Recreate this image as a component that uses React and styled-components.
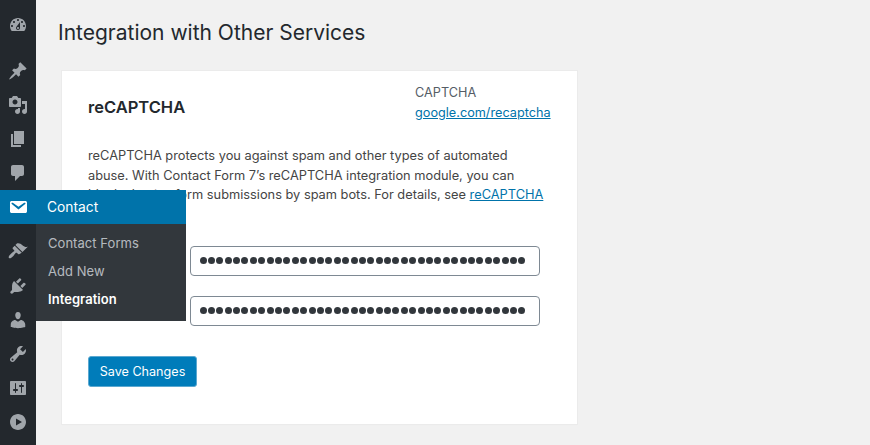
import React from "react";
import styled, { createGlobalStyle } from "styled-components";

const Global = createGlobalStyle`
  html, body { margin: 0; padding: 0; height: 100%; background: #f1f1f1; overflow: hidden; }
  body { font-family: Inter, "Liberation Sans", sans-serif; font-size: 13px; color: #444; }
`;

const Page = styled.div`
  display: flex;
  width: 870px;
  height: 445px;
  overflow: hidden;
`;
const Sidebar = styled.nav`
  flex: 0 0 36px;
  width: 36px;
  background: #23282d;
  padding-top: 8px;
  box-sizing: border-box;
  position: relative;
  z-index: 2;
`;
const MenuItem = styled.div`
  position: relative;
  height: 34px;
  width: 36px;
  display: flex;
  align-items: center;
  justify-content: center;
  margin-bottom: ${(p) => p.$gap || 0}px;
  background: ${(p) => (p.$active ? "#0073aa" : "transparent")};
  color: ${(p) => (p.$active ? "#fff" : "#a0a5aa")};
`;
const Icon = styled.svg`
  width: 20px;
  height: 20px;
  fill: currentColor;
  display: block;
`;
const Flyout = styled.div`
  position: absolute;
  left: 36px;
  top: 0;
  width: 150px;
`;
const FlyoutHead = styled.div`
  height: 34px;
  box-sizing: border-box;
  padding-left: 11px;
  background: #0073aa;
  color: #fff;
  font-size: 13.8px;
  line-height: 35px;
`;
const SubMenu = styled.ul`
  list-style: none;
  margin: 0;
  padding: 5px 0 8px;
  background: #32373c;
`;
const SubItem = styled.li`
  height: 28px;
  line-height: 28px;
  padding-left: 12px;
  font-size: 13px;
  letter-spacing: 0.05px;
  color: ${(p) => (p.$current ? "#fff" : "rgba(240,245,250,.7)")};
  font-weight: ${(p) => (p.$current ? 600 : 400)};
`;
const Main = styled.main`
  flex: 1;
  min-width: 0;
  padding: 18px 0 0 22px;
`;
const Title = styled.h1`
  margin: 0;
  font-size: 21px;
  font-weight: 400;
  line-height: 29px;
  color: #23282d;
`;
const Card = styled.section`
  box-sizing: border-box;
  width: 515px;
  height: 353px;
  margin: 24px 0 0 4px;
  padding: 0 26px;
  background: #fff;
  box-shadow: 0 0 0 1px #ebebeb, 0 1px 1px rgba(0, 0, 0, 0.03);
`;
const CardHead = styled.div`
  display: flex;
  justify-content: space-between;
  padding-top: 12px;
  height: 52px;
`;
const CardTitle = styled.h2`
  margin: 13px 0 0;
  font-size: 16.5px;
  font-weight: 600;
  line-height: 22px;
  color: #23282d;
`;
const Meta = styled.div`
  width: 136px;
  line-height: 20px;
  color: #555d66;
  font-size: 12.7px;
`;
const Link = styled.a`
  color: #0073aa;
  text-decoration: underline;
  white-space: nowrap;
`;
const Lead = styled.p`
  margin: 11px 0 0;
  width: 460px;
  line-height: 19.6px;
  color: #444;
  font-size: 12.8px;
`;
const Field = styled.div`
  display: flex;
  align-items: center;
  margin-top: ${(p) => p.$top}px;
`;
const Label = styled.label`
  flex: 0 0 102px;
  font-weight: 600;
  color: #23282d;
`;
const Secret = styled.div`
  box-sizing: border-box;
  width: 350px;
  height: 30px;
  padding: 0 8px 0 8.5px;
  display: flex;
  align-items: center;
  gap: 1.4px;
  border: 1px solid #7e8993;
  border-radius: 4px;
  background: #fff;
`;
const Dot = styled.i`
  flex: 0 0 7px;
  height: 7px;
  border-radius: 50%;
  background: #32373c;
`;
const Save = styled.button`
  display: block;
  margin-top: 30px;
  width: 109px;
  height: 31px;
  padding: 0;
  border: 1px solid #5ba8d0;
  border-radius: 3px;
  background: #007cba;
  color: #fff;
  font: 400 12.6px Inter, sans-serif;
`;

const icons = {
  dashboard: "M3.76 16h12.48c1.1-1.37 1.76-3.11 1.76-5 0-4.42-3.58-8-8-8s-8 3.58-8 8c0 1.89.66 3.63 1.76 5zM10 4c.55 0 1 .45 1 1s-.45 1-1 1-1-.45-1-1 .45-1 1-1zM6 6c.55 0 1 .45 1 1s-.45 1-1 1-1-.45-1-1 .45-1 1-1zm8 0c.55 0 1 .45 1 1s-.45 1-1 1-1-.45-1-1 .45-1 1-1zm-5.37 5.55L12 7v6c0 1.1-.9 2-2 2s-2-.9-2-2c0-.57.24-1.08.63-1.45zM4 10c.55 0 1 .45 1 1s-.45 1-1 1-1-.45-1-1 .45-1 1-1zm12 0c.55 0 1 .45 1 1s-.45 1-1 1-1-.45-1-1 .45-1 1-1zm-5 3c0-.55-.45-1-1-1s-1 .45-1 1 .45 1 1 1 1-.45 1-1z",
  post: "M10.44 3.02l1.82-1.82 6.36 6.35-1.83 1.82c-1.05-.68-2.48-.57-3.41.36l-.75.75c-.92.93-1.04 2.35-.35 3.41l-1.83 1.82-2.41-2.41-2.8 2.79c-.42.42-3.38 2.71-3.8 2.29s1.86-3.39 2.28-3.81l2.79-2.79L4.1 9.36l1.83-1.82c1.05.69 2.48.57 3.4-.36l.75-.75c.93-.92 1.05-2.35.36-3.41z",
  media: "M13 11V4c0-.55-.45-1-1-1h-1.67L9 1H5L3.67 3H2c-.55 0-1 .45-1 1v7c0 .55.45 1 1 1h10c.55 0 1-.45 1-1zM7 4.5c1.38 0 2.5 1.12 2.5 2.5S8.38 9.5 7 9.5 4.5 8.38 4.5 7 5.62 4.5 7 4.5zM14 6h5v10.5c0 1.38-1.12 2.5-2.5 2.5S14 17.88 14 16.5s1.12-2.5 2.5-2.5c.17 0 .34.02.5.05V9h-3V6zm-4 8.05V13h2v3.5c0 1.38-1.12 2.5-2.5 2.5S7 17.88 7 16.5 8.12 14 9.5 14c.17 0 .34.02.5.05z",
  page: "M6 15V2h10v13H6zm-1 1h8v2H3V5h2v11z",
  comments: "M5 2h9c1.1 0 2 .9 2 2v7c0 1.1-.9 2-2 2h-2l-5 5v-5H5c-1.1 0-2-.9-2-2V4c0-1.1.9-2 2-2z",
  email: "M3.87 4h13.25C18.37 4 19 4.59 19 5.79v8.42c0 1.19-.63 1.79-1.88 1.79H3.87c-1.25 0-1.88-.6-1.88-1.79V5.79c0-1.2.63-1.79 1.88-1.79zm6.62 8.6l6.74-5.53c.24-.2.43-.66.13-1.07-.29-.41-.82-.42-1.17-.17l-5.7 3.86L4.8 5.83c-.35-.25-.88-.24-1.17.17-.3.41-.11.87.13 1.07z",
  appearance: "M14.48 11.06L7.41 3.99l1.5-1.5c.5-.56 2.3-.47 3.51.32 1.21.8 1.43 1.28 2.91 2.1 1.18.64 2.45 1.26 4.45.85zm-.71.71L6.7 4.7 4.93 6.47c-.39.39-.39 1.02 0 1.41l1.06 1.06c.39.39.39 1.03 0 1.42-.6.6-1.43 1.11-2.21 1.69-.35.26-.7.53-1.01.84-1.59 1.59-2.66 3.21-1.77 4.1.89.89 2.51-.18 4.1-1.77.31-.31.58-.66.84-1.01.58-.78 1.09-1.61 1.69-2.21.39-.39 1.02-.39 1.41 0l1.06 1.06c.39.39 1.02.39 1.41 0z",
  plugins: "M13.11 4.36L9.87 7.6 8 5.73l3.24-3.24c.35-.34 1.05-.2 1.56.32.52.51.66 1.21.31 1.55zm-8 1.77l.91-1.12 9.01 9.01-1.19.84c-.71.71-2.63 1.16-3.82 1.16H6.14L4.9 17.26c-.59.59-1.54.59-2.12 0-.59-.58-.59-1.53 0-2.12l1.24-1.24v-3.88c0-1.13.4-3.19 1.09-3.89zm7.26 3.97l3.24-3.24c.34-.35 1.04-.21 1.55.31.52.51.66 1.21.31 1.55l-3.24 3.25z",
  users: "M10 9.25c-2.27 0-2.73-3.44-2.73-3.44C7 4.02 7.82 2 9.97 2c2.16 0 2.98 2.02 2.71 3.81 0 0-.41 3.44-2.68 3.44zm0 2.57L12.72 10c2.39 0 4.52 2.33 4.52 4.53v2.49s-3.65 1.13-7.24 1.13c-3.65 0-7.24-1.13-7.24-1.13v-2.49c0-2.25 1.94-4.48 4.47-4.48z",
  tools: "M16.68 9.77c-1.34 1.34-3.3 1.67-4.95.99l-5.41 6.52c-.99.99-2.59.99-3.58 0s-.99-2.59 0-3.57l6.52-5.42c-.68-1.65-.35-3.61.99-4.95 1.28-1.28 3.12-1.62 4.72-1.06l-2.89 2.89 2.82 2.82 2.86-2.87c.53 1.58.18 3.39-1.08 4.65zM3.81 16.21c.4.39 1.04.39 1.43 0 .4-.4.4-1.04 0-1.43-.39-.4-1.03-.4-1.43 0-.39.39-.39 1.03 0 1.43z",
  settings: "M18 16V4c0-.55-.45-1-1-1H3c-.55 0-1 .45-1 1v12c0 .55.45 1 1 1h14c.55 0 1-.45 1-1zM8 11h1c.55 0 1 .45 1 1s-.45 1-1 1H8v1.5c0 .28-.22.5-.5.5s-.5-.22-.5-.5V13H6c-.55 0-1-.45-1-1s.45-1 1-1h1V5.5c0-.28.22-.5.5-.5s.5.22.5.5V11zm5-2h-1c-.55 0-1-.45-1-1s.45-1 1-1h1V5.5c0-.28.22-.5.5-.5s.5.22.5.5V7h1c.55 0 1 .45 1 1s-.45 1-1 1h-1v5.5c0 .28-.22.5-.5.5s-.5-.22-.5-.5V9z",
  play: "M10 2c4.42 0 8 3.58 8 8s-3.58 8-8 8-8-3.58-8-8 3.58-8 8-8zm-2 11.5l6-3.5-6-3.5v7z",
};

const Glyph = ({ name }) => (
  <Icon viewBox="0 0 20 20" aria-hidden="true">
    <path fillRule="evenodd" d={icons[name]} />
  </Icon>
);

const Masked = () => (
  <Secret role="textbox" aria-readonly="true">
    {Array.from({ length: 39 }, (_, i) => (
      <Dot key={i} />
    ))}
  </Secret>
);

export default function App() {
  return (
    <Page>
      <Global />
      <Sidebar>
        <MenuItem $gap={12}><Glyph name="dashboard" /></MenuItem>
        <MenuItem><Glyph name="post" /></MenuItem>
        <MenuItem><Glyph name="media" /></MenuItem>
        <MenuItem><Glyph name="page" /></MenuItem>
        <MenuItem><Glyph name="comments" /></MenuItem>
        <MenuItem $active $gap={10}>
          <Glyph name="email" />
          <Flyout>
            <FlyoutHead>Contact</FlyoutHead>
            <SubMenu>
              <SubItem>Contact Forms</SubItem>
              <SubItem>Add New</SubItem>
              <SubItem $current>Integration</SubItem>
            </SubMenu>
          </Flyout>
        </MenuItem>
        <MenuItem $gap={1}><Glyph name="appearance" /></MenuItem>
        <MenuItem><Glyph name="plugins" /></MenuItem>
        <MenuItem><Glyph name="users" /></MenuItem>
        <MenuItem><Glyph name="tools" /></MenuItem>
        <MenuItem><Glyph name="settings" /></MenuItem>
        <MenuItem><Glyph name="play" /></MenuItem>
      </Sidebar>
      <Main>
        <Title>Integration with Other Services</Title>
        <Card>
          <CardHead>
            <CardTitle>reCAPTCHA</CardTitle>
            <Meta>
              CAPTCHA
              <br />
              <Link href="#">google.com/recaptcha</Link>
            </Meta>
          </CardHead>
          <Lead>
            reCAPTCHA protects you against spam and other types of automated abuse. With Contact Form 7’s reCAPTCHA integration module, you can block abusive form submissions by spam bots. For details, see <Link href="#">reCAPTCHA</Link> (v3).
          </Lead>
          <Field $top={21.6}>
            <Label>Site Key</Label>
            <Masked />
          </Field>
          <Field $top={20}>
            <Label>Secret Key</Label>
            <Masked />
          </Field>
          <Save type="button">Save Changes</Save>
        </Card>
      </Main>
    </Page>
  );
}
